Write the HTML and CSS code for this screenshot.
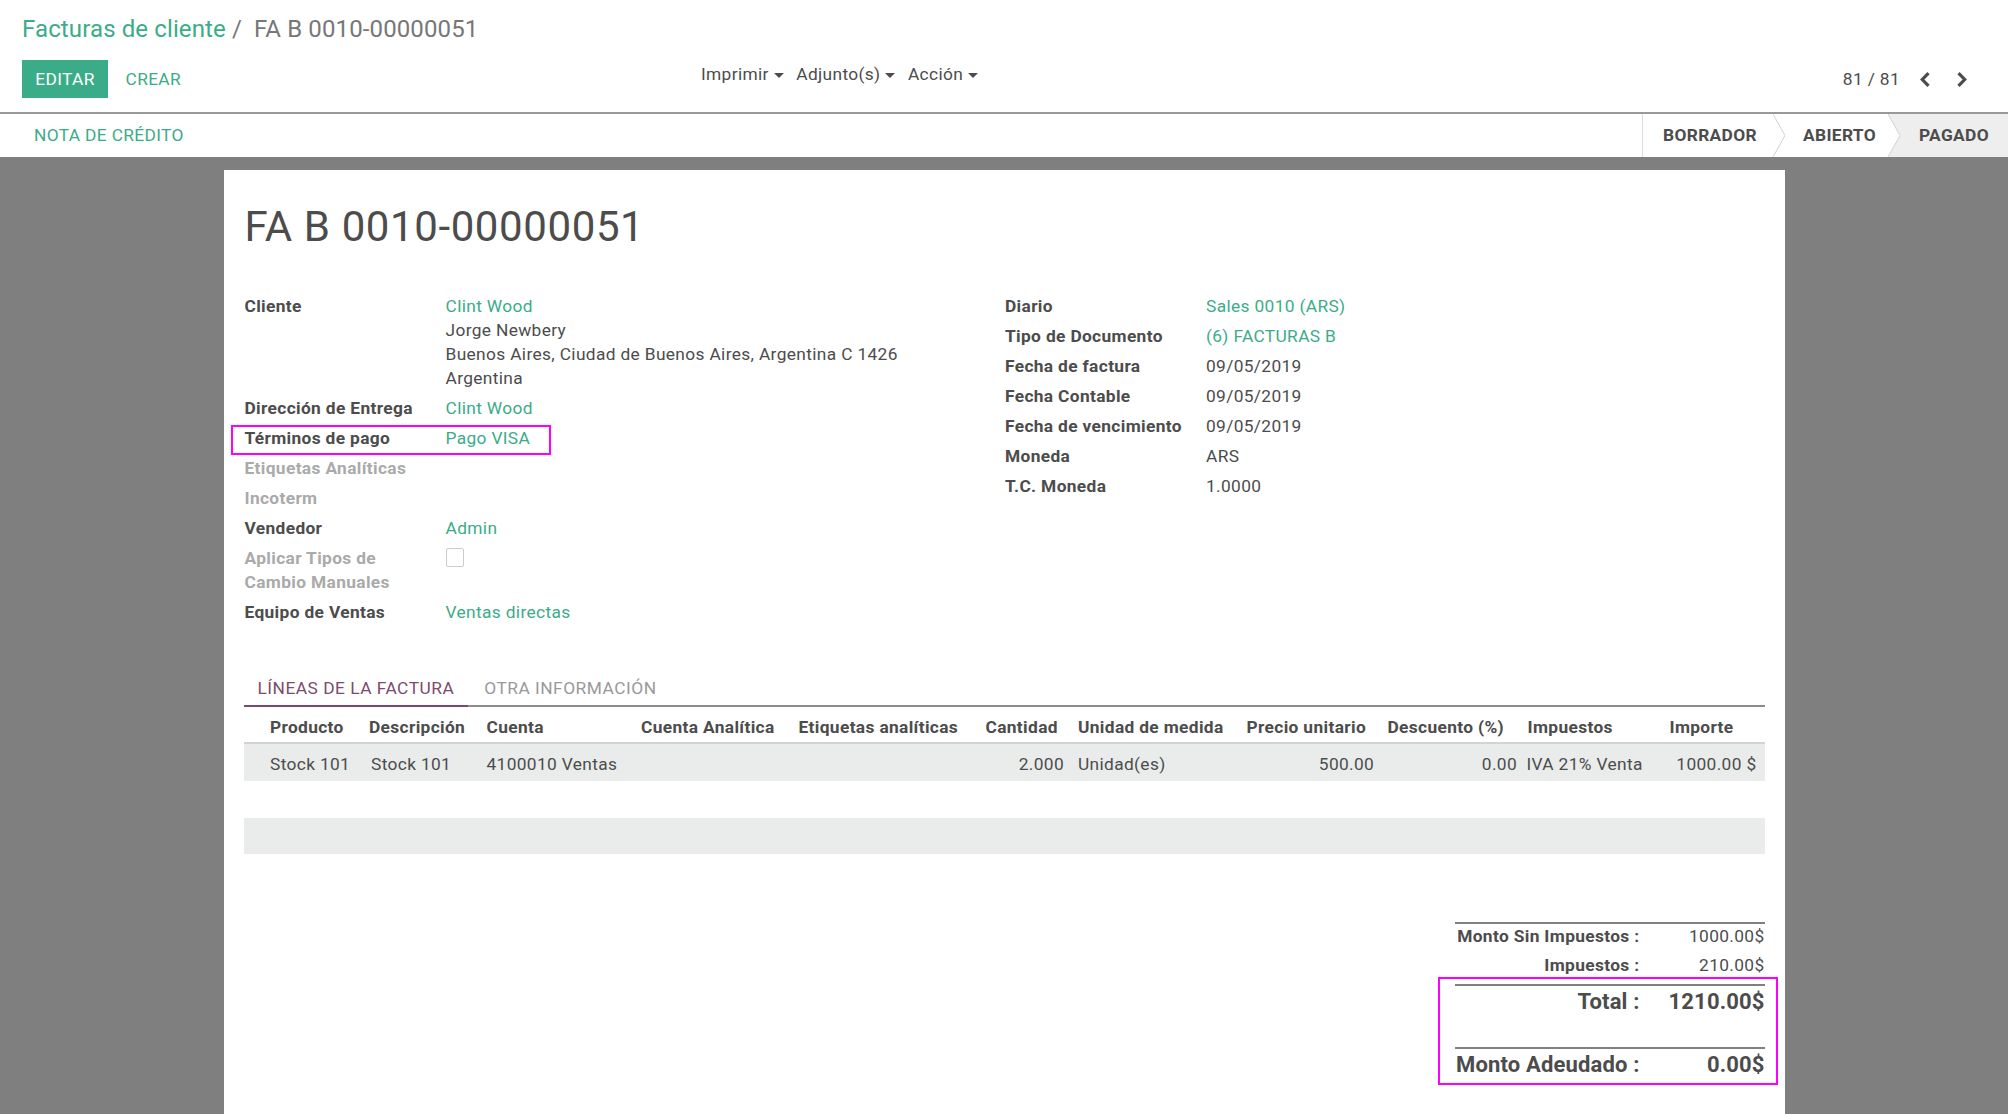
FILE: index.html
```html
<!DOCTYPE html>
<html lang="es">
<head>
<meta charset="utf-8">
<title>FA B 0010-00000051</title>
<link rel="stylesheet" href="styles.css">
</head>
<body>
<div class="cp">
  <div class="breadcrumb"><span class="bc-link">Facturas de cliente</span><span class="bc-sep">/</span><span class="bc-cur">FA B 0010-00000051</span></div>
  <div class="cp-row">
    <div class="cp-buttons">
      <button class="btn btn-primary">EDITAR</button>
      <button class="btn btn-link btn-create">CREAR</button>
    </div>
    <div class="sidebar">
      <span class="dd">Imprimir<span class="caret"></span></span>
      <span class="dd">Adjunto(s)<span class="caret"></span></span>
      <span class="dd">Acción<span class="caret"></span></span>
    </div>
    <div class="pager">
      <span class="pager-value">81 / 81</span>
      <span class="pager-btn"><svg width="10" height="15" viewBox="0 0 10 15"><polyline points="8.5,1.2 2.3,7.5 8.5,13.8"/></svg></span>
      <span class="pager-btn"><svg width="10" height="15" viewBox="0 0 10 15"><polyline points="1.5,1.2 7.7,7.5 1.5,13.8"/></svg></span>
    </div>
  </div>
</div>
<div class="statusbar">
  <button class="btn btn-link st-action">NOTA DE CRÉDITO</button>
  <div class="st-status">
    <div class="st-item st-1">BORRADOR<svg class="st-arrow" width="12" height="43" viewBox="0 0 12 43"><polyline points="0,0 12,21.5 0,43" fill="none" stroke="#d2d2d2" stroke-width="1"/></svg></div>
    <div class="st-item st-2">ABIERTO<svg class="st-arrow" width="12" height="43" viewBox="0 0 12 43"><polygon points="0,0 12,21.5 0,43" fill="#ffffff"/><polyline points="0,0 12,21.5 0,43" fill="none" stroke="#d2d2d2" stroke-width="1"/></svg></div>
    <div class="st-item st-3">PAGADO</div>
  </div>
</div>
<main class="content">
  <div class="sheet">
    <h1 class="title">FA B 0010-00000051</h1>
    <div class="groups">
      <div class="group">
        <div class="frow">
          <div class="flabel">Cliente</div>
          <div class="fvalue"><div class="link">Clint Wood</div><div>Jorge Newbery</div><div>Buenos Aires, Ciudad de Buenos Aires, Argentina C 1426</div><div>Argentina</div></div>
        </div>
        <div class="frow"><div class="flabel">Dirección de Entrega</div><div class="fvalue link">Clint Wood</div></div>
        <div class="frow"><div class="flabel">Términos de pago</div><div class="fvalue link">Pago VISA</div><div class="hl-terms"></div></div>
        <div class="frow"><div class="flabel muted">Etiquetas Analíticas</div><div class="fvalue"></div></div>
        <div class="frow"><div class="flabel muted">Incoterm</div><div class="fvalue"></div></div>
        <div class="frow"><div class="flabel">Vendedor</div><div class="fvalue link">Admin</div></div>
        <div class="frow"><div class="flabel muted">Aplicar Tipos de<br>Cambio Manuales</div><div class="fvalue"><div class="checkbox"></div></div></div>
        <div class="frow"><div class="flabel">Equipo de Ventas</div><div class="fvalue link">Ventas directas</div></div>
      </div>
      <div class="group">
        <div class="frow"><div class="flabel">Diario</div><div class="fvalue link">Sales 0010 (ARS)</div></div>
        <div class="frow"><div class="flabel">Tipo de Documento</div><div class="fvalue link">(6) FACTURAS B</div></div>
        <div class="frow"><div class="flabel">Fecha de factura</div><div class="fvalue">09/05/2019</div></div>
        <div class="frow"><div class="flabel">Fecha Contable</div><div class="fvalue">09/05/2019</div></div>
        <div class="frow"><div class="flabel">Fecha de vencimiento</div><div class="fvalue">09/05/2019</div></div>
        <div class="frow"><div class="flabel">Moneda</div><div class="fvalue">ARS</div></div>
        <div class="frow"><div class="flabel">T.C. Moneda</div><div class="fvalue">1.0000</div></div>
      </div>
    </div>

    <div class="notebook">
      <div class="tabs">
        <div class="tab active">LÍNEAS DE LA FACTURA</div>
        <div class="tab">OTRA INFORMACIÓN</div>
      </div>
      <table class="lines">
        <thead>
          <tr>
            <th class="c1">Producto</th>
            <th class="c2">Descripción</th>
            <th class="c3">Cuenta</th>
            <th class="c4">Cuenta Analítica</th>
            <th class="c5">Etiquetas analíticas</th>
            <th class="c6">Cantidad</th>
            <th class="c7">Unidad de medida</th>
            <th class="c8">Precio unitario</th>
            <th class="c9">Descuento (%)</th>
            <th class="c10">Impuestos</th>
            <th class="c11">Importe</th>
          </tr>
        </thead>
        <tbody>
          <tr class="stripe">
            <td class="c1">Stock 101</td>
            <td class="c2">Stock 101</td>
            <td class="c3">4100010 Ventas</td>
            <td class="c4"></td>
            <td class="c5"></td>
            <td class="c6 num">2.000</td>
            <td class="c7">Unidad(es)</td>
            <td class="c8 num">500.00</td>
            <td class="c9 num">0.00</td>
            <td class="c10">IVA 21% Venta</td>
            <td class="c11 num">1000.00 $</td>
          </tr>
          <tr class="empty"><td colspan="11"></td></tr>
          <tr class="empty stripe"><td colspan="11"></td></tr>
        </tbody>
      </table>

      <div class="totals-wrap">
        <div class="totals">
          <div class="trow ta"><span class="tlabel">Monto Sin Impuestos :</span><span class="tval">1000.00$</span></div>
          <div class="trow tb"><span class="tlabel">Impuestos :</span><span class="tval">210.00$</span></div>
          <div class="trow tc"><span class="tlabel">Total :</span><span class="tval">1210.00$</span></div>
          <div class="tspacer"></div>
          <div class="trow td"><span class="tlabel">Monto Adeudado :</span><span class="tval">0.00$</span></div>
          <div class="hl-total"></div>
        </div>
      </div>
    </div>
  </div>
</main>
</body>
</html>
```

FILE: styles.css
```css
* { box-sizing: border-box; }

html, body {
  margin: 0;
  padding: 0;
}

body {
  width: 2008px;
  height: 1114px;
  overflow: hidden;
  font-family: Roboto, "Liberation Sans", sans-serif;
  font-size: 17.33px;
  letter-spacing: 0.35px;
  color: #4c4c4c;
  background: #7f7f7f;
}

/* ---------- control panel ---------- */
.cp {
  background: #fff;
  border-bottom: 2px solid #999;
  padding: 13px 28px 14px 22px;
}

.breadcrumb {
  font-size: 24px;
  line-height: 32px;
  letter-spacing: 0.12px;
  white-space: nowrap;
}

.bc-link { color: #3bac88; }
.bc-sep { color: #777; padding: 0 12px 0 6px; }
.bc-cur { color: #777; }

.cp-row {
  display: flex;
  align-items: flex-start;
  margin-top: 15px;
  height: 38px;
}

.cp-buttons {
  display: flex;
  width: 679px;
}

.btn {
  font-family: inherit;
  font-size: 17.33px;
  letter-spacing: inherit;
  border: 0;
  background: none;
  padding: 0;
  margin: 0;
  cursor: pointer;
  white-space: nowrap;
}

.btn-primary {
  background: #3bac88;
  color: #fff;
  width: 86px;
  height: 38px;
  line-height: 38px;
}

.btn-link {
  color: #3bac88;
  height: 38px;
  line-height: 38px;
}

.btn-create { margin-left: 17.5px; }

.sidebar {
  display: flex;
  margin-top: 2px;
  line-height: 24px;
  white-space: nowrap;
}

.dd { margin-right: 12.5px; }

.caret {
  display: inline-block;
  vertical-align: middle;
  margin-left: 5px;
  width: 0;
  height: 0;
  border-left: 5px solid transparent;
  border-right: 5px solid transparent;
  border-top: 5px solid #4c4c4c;
}

.pager {
  margin-left: auto;
  display: flex;
  align-items: center;
  height: 38px;
  white-space: nowrap;
}

.pager-value { margin-right: 6px; }

.pager-btn {
  width: 37px;
  height: 38px;
  display: flex;
  align-items: center;
  justify-content: center;
}

.pager-btn svg polyline {
  fill: none;
  stroke: #4c4c4c;
  stroke-width: 3.2;
}

/* ---------- status bar ---------- */
.statusbar {
  display: flex;
  height: 43px;
  background: #fff;
}

.st-action {
  height: 43px;
  line-height: 43px;
  padding-left: 34px;
}

.st-status {
  margin-left: auto;
  display: flex;
  border-left: 1px solid #ddd;
}

.st-item {
  position: relative;
  height: 43px;
  line-height: 43px;
  font-weight: 700;
  color: #4c4c4c;
  white-space: nowrap;
}

.st-1 { width: 130px; padding-left: 20px; }
.st-2 { width: 115px; padding-left: 30px; }
.st-3 { width: 120px; padding-left: 31px; background: #eeeeee; }

.st-arrow {
  position: absolute;
  top: 0;
  right: -12px;
  z-index: 1;
}

/* ---------- sheet ---------- */
.content { padding-top: 13px; }

.sheet {
  width: 1561px;
  margin: 0 auto;
  background: #fff;
  padding: 32px 20px 60px;
  min-height: 1000px;
}

.title {
  margin: 0 0 0 1px;
  font-size: 42px;
  font-weight: 400;
  line-height: 50px;
  letter-spacing: 0.6px;
  color: #4c4c4c;
}

.groups {
  display: grid;
  grid-template-columns: 1fr 1fr;
  margin-top: 39px;
  align-items: start;
}

.frow {
  position: relative;
  display: grid;
  grid-template-columns: 201px 1fr;
  padding: 3px 0 3px 1px;
  line-height: 24px;
}

.flabel {
  font-weight: 700;
  white-space: nowrap;
}

.flabel.muted { color: #aaa; }

.fvalue { white-space: nowrap; }

.link { color: #3bac88; }

.checkbox {
  width: 18px;
  height: 19px;
  margin: 2px 0 0 0;
  border: 1px solid #ccc;
  border-radius: 2px;
  background: #fff;
}

.hl-terms {
  position: absolute;
  left: -13px;
  top: 2px;
  width: 320px;
  height: 30px;
  border: 2px solid #f0f;
}

/* ---------- notebook ---------- */
.notebook { margin-top: 43px; }

.tabs {
  display: flex;
  border-bottom: 2px solid #8c8c8c;
}

.tab {
  padding: 6px 14px 5px;
  line-height: 24px;
  letter-spacing: 0.5px;
  color: #999;
  white-space: nowrap;
}

.tab.active {
  color: #7a4b6e;
  border-bottom: 2px solid #7a4b6e;
  margin-bottom: -2px;
}

.tab + .tab { padding-left: 16px; }

.lines {
  width: 100%;
  table-layout: fixed;
  border-collapse: separate;
  border-spacing: 0;
}

.lines th {
  font-weight: 700;
  text-align: left;
  padding: 7.5px 0 3.5px;
  line-height: 24px;
  border-bottom: 2px solid #d3d3d3;
  white-space: nowrap;
}

.lines td {
  padding: 8px 0 5px;
  line-height: 24px;
  white-space: nowrap;
}

.lines td.num { text-align: right; }

.lines tr.stripe { background: #e9eceb; }
.lines tr.empty { height: 36.5px; }
.lines tr.empty td { padding: 0; }

.c1 { width: 115px; padding-left: 26.5px !important; }
.c2 { width: 118px; }
th.c2 { padding-left: 10.5px; }
td.c2 { padding-left: 12.5px; }
.c3 { width: 155px; padding-left: 10px !important; }
.c4 { width: 158px; padding-left: 9.5px !important; }
.c5 { width: 179px; padding-left: 9px !important; }
.c6 { width: 100px; }
th.c6 { padding-left: 17px; }
td.c6 { padding-right: 4.5px; }
.c7 { width: 166px; padding-left: 9.5px !important; }
.c8 { width: 145px; }
th.c8 { padding-left: 12px; }
td.c8 { padding-right: 5.3px; }
.c9 { width: 141px; }
th.c9 { padding-left: 8px; }
td.c9 { padding-right: 3.5px; }
.c10 { width: 132px; }
th.c10 { padding-left: 7px; }
td.c10 { padding-left: 6px; }
.c11 { width: 112px; }
th.c11 { text-align: center !important; padding-right: 14px; }
td.c11 { padding-right: 8px; }

/* ---------- totals ---------- */
.totals-wrap {
  display: flex;
  justify-content: flex-end;
  margin-top: 68px;
}

.totals {
  position: relative;
  width: 310px;
}

.trow {
  display: flex;
  justify-content: flex-end;
  white-space: nowrap;
}

.tlabel { font-weight: 700; }

.tval {
  width: 125px;
  flex: none;
  text-align: right;
}

.trow.ta {
  border-top: 2px solid #808080;
  line-height: 24px;
  padding-bottom: 4px;
}

.trow.tb {
  line-height: 24px;
  padding: 1px 0 6.5px;
}

.trow.tc,
.trow.td {
  border-top: 2px solid #808080;
  font-size: 22px;
  font-weight: 700;
  line-height: 30px;
  letter-spacing: 0.15px;
  padding-top: 1.2px;
}

.tspacer { height: 30.2px; }

.hl-total {
  position: absolute;
  left: -17px;
  top: 55px;
  width: 340px;
  height: 108px;
  border: 2px solid #f0f;
}
```
